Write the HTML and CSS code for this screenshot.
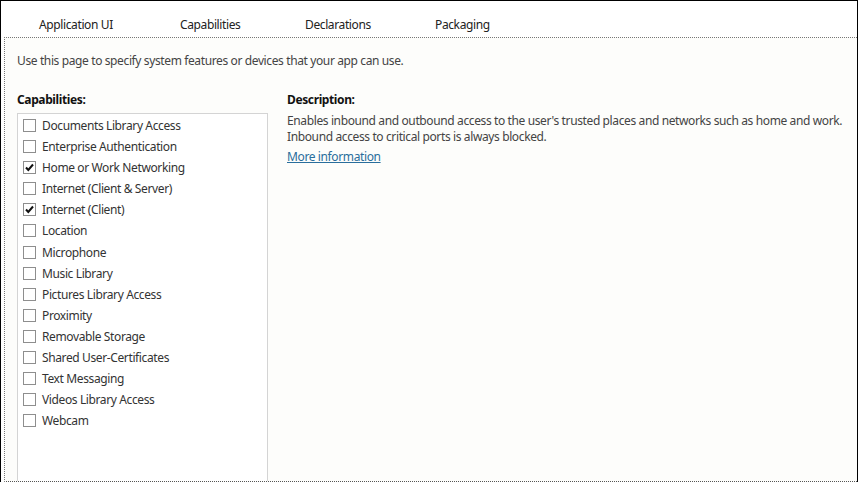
FILE: index.html
```html
<!DOCTYPE html>
<html>
<head>
<meta charset="utf-8">
<link rel="stylesheet" href="styles.css">
</head>
<body>
<div class="frame">
  <div class="tabs">
    <span class="tab t1">Application UI</span>
    <span class="tab t2">Capabilities</span>
    <span class="tab t3">Declarations</span>
    <span class="tab t4">Packaging</span>
  </div>
  <div class="panel">
    <p class="intro">Use this page to specify system features or devices that your app can use.</p>
    <div class="cols">
      <div class="left">
        <div class="label">Capabilities:</div>
        <ul class="list">
          <li><span class="cb"></span>Documents Library Access</li>
          <li><span class="cb"></span>Enterprise Authentication</li>
          <li><span class="cb"><svg viewBox="0 0 11 11" width="11" height="11"><path d="M2 5.5 L4.3 8 L9 2.5" fill="none" stroke="#111" stroke-width="2"/></svg></span>Home or Work Networking</li>
          <li><span class="cb"></span>Internet (Client &amp; Server)</li>
          <li><span class="cb"><svg viewBox="0 0 11 11" width="11" height="11"><path d="M2 5.5 L4.3 8 L9 2.5" fill="none" stroke="#111" stroke-width="2"/></svg></span>Internet (Client)</li>
          <li><span class="cb"></span>Location</li>
          <li><span class="cb"></span>Microphone</li>
          <li><span class="cb"></span>Music Library</li>
          <li><span class="cb"></span>Pictures Library Access</li>
          <li><span class="cb"></span>Proximity</li>
          <li><span class="cb"></span>Removable Storage</li>
          <li><span class="cb"></span>Shared User-Certificates</li>
          <li><span class="cb"></span>Text Messaging</li>
          <li><span class="cb"></span>Videos Library Access</li>
          <li><span class="cb"></span>Webcam</li>
        </ul>
      </div>
      <div class="right">
        <div class="label">Description:</div>
        <p class="desc"><span class="line">Enables inbound and outbound access to the user's trusted places and networks such as home and work.</span><span class="line">Inbound access to critical ports is always blocked.</span></p>
        <a class="more" href="#">More information</a>
      </div>
    </div>
  </div>
</div>
</body>
</html>
```
FILE: styles.css
```css
html, body {
  margin: 0;
  padding: 0;
  background: #ffffff;
}
body {
  font-family: "Noto Sans", "Open Sans", sans-serif;
  font-size: 12px;
  letter-spacing: -0.38px;
  color: #333;
}
.frame {
  width: 858px;
  height: 482px;
  border-top: 1px solid #000;
  border-left: 1px solid #000;
  border-right: 1px solid #000;
  box-sizing: border-box;
  display: flex;
  flex-direction: column;
  background: #fff;
}
.tabs {
  height: 36px;
  display: flex;
  align-items: center;
  padding-top: 10px;
  padding-left: 38px;
  box-sizing: border-box;
  color: #222;
}
.tab { flex: none; }
.t1 { width: 141px; }
.t2 { width: 125px; }
.t3 { width: 130px; }
.panel {
  flex: 1;
  margin-left: 3px;
  border-top: 1px dotted #777;
  border-left: 1px dotted #777;
  border-bottom: 1px dotted #555;
  background: #fdfdfb;
  padding: 0 0 0 12px;
  display: flex;
  flex-direction: column;
  min-height: 0;
}
.intro {
  margin: 15px 0 0 0;
  line-height: 16px;
  color: #444;
}
.cols {
  flex: 1;
  display: flex;
  margin-top: 23px;
  min-height: 0;
}
.left {
  width: 251px;
  display: flex;
  flex-direction: column;
}
.label {
  font-weight: bold;
  color: #111;
  line-height: 16px;
}
.list {
  flex: 1;
  list-style: none;
  margin: 5px 0 0 0;
  padding: 1px 0 0 5px;
  border: 1px solid #d4d4d4;
  border-bottom: none;
  background: #fff;
}
.list li {
  height: 21.08px;
  display: flex;
  align-items: center;
  color: #333;
  white-space: nowrap;
}
.cb {
  width: 11px;
  height: 11px;
  border: 1px solid #8e8e8e;
  background: #fff;
  margin-right: 6px;
  display: flex;
  align-items: center;
  justify-content: center;
  flex: none;
}
.right {
  margin-left: 19px;
  display: flex;
  flex-direction: column;
}
.desc {
  margin: 5px 0 0 0;
  color: #444;
  white-space: nowrap;
  display: flex;
  flex-direction: column;
}
.line {
  display: block;
  height: 16px;
  line-height: 16px;
}
.more {
  margin-top: 4px;
  color: #2a6e9c;
  text-decoration: underline;
  line-height: 16px;
  align-self: flex-start;
}
```
